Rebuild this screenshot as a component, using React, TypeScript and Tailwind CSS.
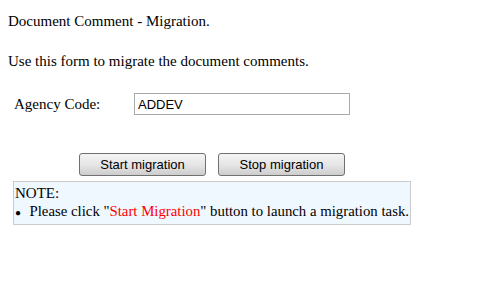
export default function App() {
  return (
    <div className="min-h-screen bg-white text-black p-2 text-[15px] leading-[18px]" style={{ fontFamily: '"Liberation Serif", "Times New Roman", serif' }}>
      <p className="mt-[4px]">Document Comment - Migration.</p>
      <p className="mt-[22px]">Use this form to migrate the document comments.</p>

      <div className="mt-[23px] flex items-center pl-[6px]">
        <span className="w-[120px]">Agency Code:</span>
        <input
          defaultValue="ADDEV"
          className="h-[22px] w-[216px] border border-[#a9a9a9] px-[3px] text-[13px] outline-none"
          style={{ fontFamily: '"Liberation Sans", Arial, sans-serif' }}
        />
      </div>

      <div className="mt-[38px] flex gap-[12px] pl-[71px]">
        {['Start migration', 'Stop migration'].map((t) => (
          <button
            key={t}
            className="h-[23px] w-[127px] rounded-[3px] border border-[#707070] bg-gradient-to-b from-[#f4f4f4] via-[#e6e6e6] to-[#cdcdcd] text-[13px] text-black"
            style={{ fontFamily: '"Liberation Sans", Arial, sans-serif' }}
          >
            {t}
          </button>
        ))}
      </div>

      <div className="mt-[5px] ml-[5px] w-[398px] border border-[#cccccc] bg-[#f0f8ff] px-[1px] py-[2px]">
        <div>NOTE:</div>
        <ul>
          <li className="flex items-baseline whitespace-nowrap">
            <span className="w-[15px] text-[10px]">●</span>
            <span className="text-[14.8px]">
              Please click "<span className="text-[#ff0000]">Start Migration</span>" button to launch a migration task.
            </span>
          </li>
        </ul>
      </div>
    </div>
  );
}
